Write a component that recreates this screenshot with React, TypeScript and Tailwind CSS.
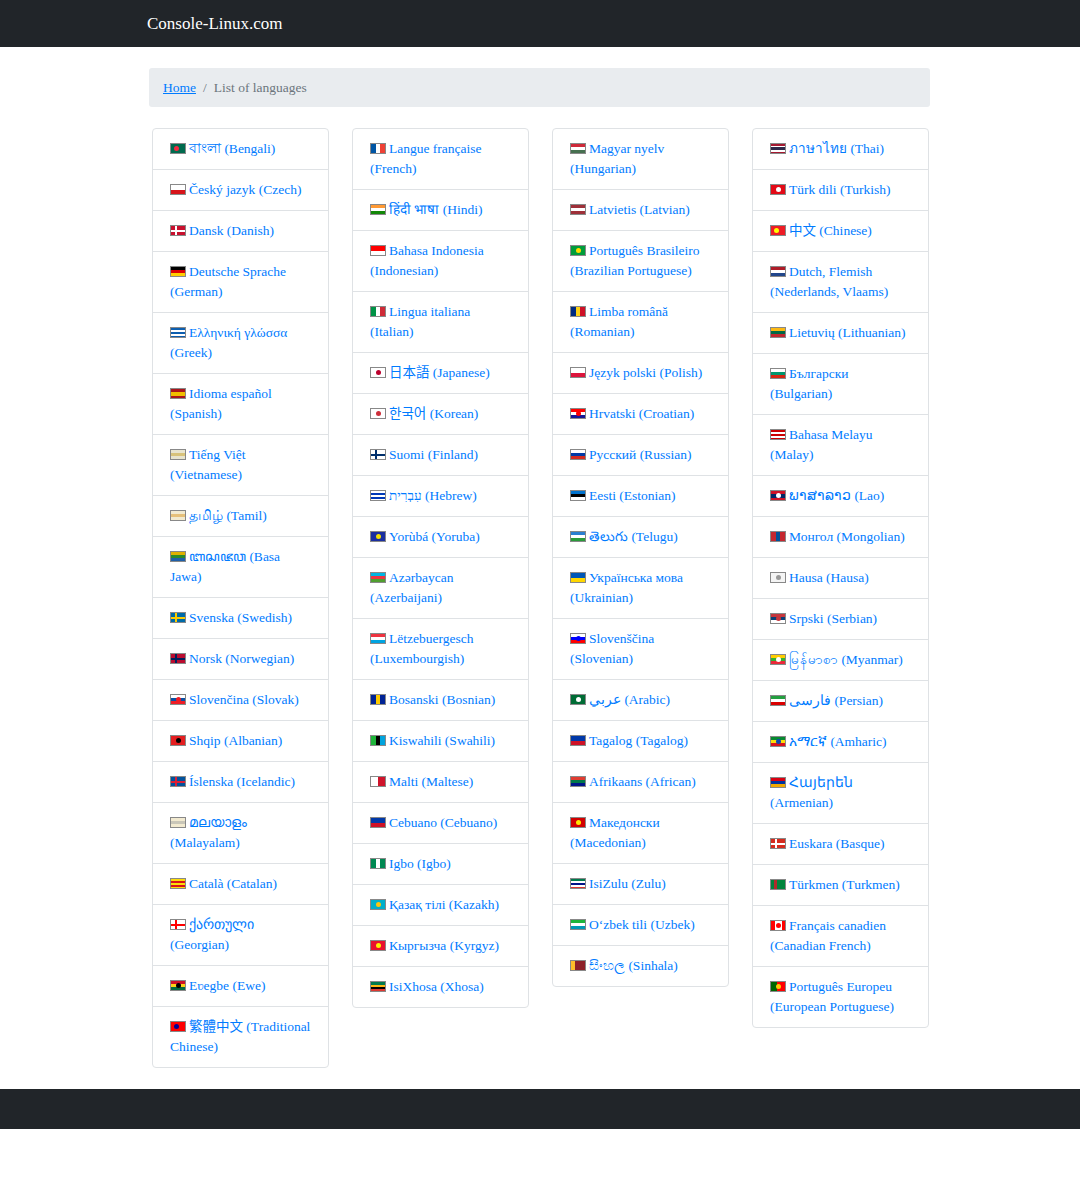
type F = { d: 'h' | 'v'; c: string[]; dot?: string; dotL?: boolean; cross?: string };
type L = { t: string; f: F };

const h = (c: string[], dot?: string): F => ({ d: 'h', c, dot });
const v = (c: string[], dot?: string): F => ({ d: 'v', c, dot });
const x = (bg: string, cross: string): F => ({ d: 'h', c: [bg], cross });

const cols: L[][] = [
  [
    { t: 'বাংলা (Bengali)', f: { d: 'h', c: ['#006a4e'], dot: '#f42a41', dotL: true } },
    { t: 'Český jazyk (Czech)', f: h(['#ffffff', '#d7141a'], '') },
    { t: 'Dansk (Danish)', f: x('#c8102e', '#ffffff') },
    { t: 'Deutsche Sprache (German)', f: h(['#000000', '#dd0000', '#ffce00']) },
    { t: 'Ελληνική γλώσσα (Greek)', f: h(['#0d5eaf', '#ffffff', '#0d5eaf', '#ffffff', '#0d5eaf']) },
    { t: 'Idioma español (Spanish)', f: h(['#aa151b', '#f1bf00', '#f1bf00', '#aa151b']) },
    { t: 'Tiếng Việt (Vietnamese)', f: h(['#e8e4cf', '#d8c27a', '#e8e4cf']) },
    { t: 'தமிழ் (Tamil)', f: h(['#f2ead0', '#e6c07a', '#f2ead0']) },
    { t: 'ꦧꦱꦗꦮ (Basa Jawa)', f: h(['#e0b000', '#2a8a2a', '#1f5fa8']) },
    { t: 'Svenska (Swedish)', f: x('#006aa7', '#fecc00') },
    { t: 'Norsk (Norwegian)', f: x('#ba0c2f', '#00205b') },
    { t: 'Slovenčina (Slovak)', f: h(['#ffffff', '#0b4ea2', '#ee1c25'], '#ee1c25') },
    { t: 'Shqip (Albanian)', f: h(['#e41e20'], '#000000') },
    { t: 'Íslenska (Icelandic)', f: x('#02529c', '#dc1e35') },
    { t: 'മലയാളം (Malayalam)', f: h(['#f2ead0', '#c9c6b8', '#f2ead0']) },
    { t: 'Català (Catalan)', f: h(['#fcdd09', '#da121a', '#fcdd09', '#da121a', '#fcdd09']) },
    { t: 'ქართული (Georgian)', f: x('#ffffff', '#ff0000') },
    { t: 'Eʋegbe (Ewe)', f: h(['#ce1126', '#fcd116', '#006b3f'], '#000000') },
    { t: '繁體中文 (Traditional Chinese)', f: { d: 'h', c: ['#fe0000'], dot: '#000095', dotL: true } },
  ],
  [
    { t: 'Langue française (French)', f: v(['#0055a4', '#ffffff', '#ef4135']) },
    { t: 'हिंदी भाषा (Hindi)', f: h(['#ff9933', '#ffffff', '#138808']) },
    { t: 'Bahasa Indonesia (Indonesian)', f: h(['#ff0000', '#ffffff']) },
    { t: 'Lingua italiana (Italian)', f: v(['#009246', '#ffffff', '#ce2b37']) },
    { t: '日本語 (Japanese)', f: h(['#ffffff'], '#bc002d') },
    { t: '한국어 (Korean)', f: h(['#ffffff'], '#cd2e3a') },
    { t: 'Suomi (Finland)', f: x('#ffffff', '#002f6c') },
    { t: 'עִבְרִית (Hebrew)', f: h(['#ffffff', '#0038b8', '#ffffff', '#0038b8', '#ffffff']) },
    { t: 'Yorùbá (Yoruba)', f: h(['#1b2f9f'], '#f5e000') },
    { t: 'Azərbaycan (Azerbaijani)', f: h(['#00b5e2', '#ef3340', '#509e2f']) },
    { t: 'Lëtzebuergesch (Luxembourgish)', f: h(['#ef3340', '#ffffff', '#00a3e0']) },
    { t: 'Bosanski (Bosnian)', f: v(['#002395', '#fecb00', '#002395']) },
    { t: 'Kiswahili (Swahili)', f: v(['#1eb53a', '#000000', '#00a3dd']) },
    { t: 'Malti (Maltese)', f: v(['#ffffff', '#cf142b']) },
    { t: 'Cebuano (Cebuano)', f: h(['#0038a8', '#ce1126']) },
    { t: 'Igbo (Igbo)', f: v(['#008751', '#ffffff', '#008751']) },
    { t: 'Қазақ тілі (Kazakh)', f: h(['#00afca'], '#fec50c') },
    { t: 'Кыргызча (Kyrgyz)', f: h(['#e8112d'], '#ffef00') },
    { t: 'IsiXhosa (Xhosa)', f: h(['#007a4d', '#ffb612', '#000000', '#de3831']) },
  ],
  [
    { t: 'Magyar nyelv (Hungarian)', f: h(['#ce2939', '#ffffff', '#477050']) },
    { t: 'Latvietis (Latvian)', f: h(['#9e3039', '#ffffff', '#9e3039']) },
    { t: 'Português Brasileiro (Brazilian Portuguese)', f: h(['#009c3b'], '#ffdf00') },
    { t: 'Limba română (Romanian)', f: v(['#002b7f', '#fcd116', '#ce1126']) },
    { t: 'Język polski (Polish)', f: h(['#ffffff', '#dc143c']) },
    { t: 'Hrvatski (Croatian)', f: h(['#ff0000', '#ffffff', '#171796'], '#ff0000') },
    { t: 'Русский (Russian)', f: h(['#ffffff', '#0039a6', '#d52b1e']) },
    { t: 'Eesti (Estonian)', f: h(['#0072ce', '#000000', '#ffffff']) },
    { t: 'తెలుగు (Telugu)', f: h(['#2a7fd0', '#ffffff', '#2a9a3a']) },
    { t: 'Українська мова (Ukrainian)', f: h(['#0057b7', '#ffd700']) },
    { t: 'Slovenščina (Slovenian)', f: h(['#ffffff', '#0000ff', '#ff0000'], '#0000ff') },
    { t: 'عربي (Arabic)', f: h(['#006c35'], '#ffffff') },
    { t: 'Tagalog (Tagalog)', f: h(['#0038a8', '#ce1126']) },
    { t: 'Afrikaans (African)', f: h(['#e03c31', '#007749', '#001489']) },
    { t: 'Македонски (Macedonian)', f: h(['#d20000'], '#ffe600') },
    { t: 'IsiZulu (Zulu)', f: h(['#007a4d', '#ffffff', '#001489', '#ffffff', '#de3831']) },
    { t: 'O‘zbek tili (Uzbek)', f: h(['#1eb53a', '#ffffff', '#0099b5']) },
    { t: 'සිංහල (Sinhala)', f: v(['#ffbe29', '#8d2029', '#8d2029', '#8d2029']) },
  ],
  [
    { t: 'ภาษาไทย (Thai)', f: h(['#a51931', '#ffffff', '#2d2a4a', '#2d2a4a', '#ffffff', '#a51931']) },
    { t: 'Türk dili (Turkish)', f: h(['#e30a17'], '#ffffff') },
    { t: '中文 (Chinese)', f: { d: 'h', c: ['#ee1c25'], dot: '#ffff00', dotL: true } },
    { t: 'Dutch, Flemish (Nederlands, Vlaams)', f: h(['#ae1c28', '#ffffff', '#21468b']) },
    { t: 'Lietuvių (Lithuanian)', f: h(['#fdb913', '#006a44', '#c1272d']) },
    { t: 'Български (Bulgarian)', f: h(['#ffffff', '#00966e', '#d62612']) },
    { t: 'Bahasa Melayu (Malay)', f: h(['#cc0001', '#ffffff', '#cc0001', '#ffffff', '#cc0001']) },
    { t: 'ພາສາລາວ (Lao)', f: h(['#ce1126', '#002868', '#002868', '#ce1126'], '#ffffff') },
    { t: 'Монгол (Mongolian)', f: v(['#c4272f', '#015197', '#c4272f']) },
    { t: 'Hausa (Hausa)', f: h(['#f4f4f4'], '#999999') },
    { t: 'Srpski (Serbian)', f: h(['#c6363c', '#0c4076', '#ffffff'], '#c6363c') },
    { t: 'မြန်မာစာ (Myanmar)', f: h(['#fecb00', '#34b233', '#ea2839'], '#ffffff') },
    { t: 'فارسی (Persian)', f: h(['#239f40', '#ffffff', '#da0000']) },
    { t: 'አማርኛ (Amharic)', f: h(['#078930', '#fcdd09', '#da121a'], '#0f47af') },
    { t: 'Հայերեն (Armenian)', f: h(['#d90012', '#0033a0', '#f2a800']) },
    { t: 'Euskara (Basque)', f: x('#d52b1e', '#ffffff') },
    { t: 'Türkmen (Turkmen)', f: v(['#00843d', '#b22a2a', '#00843d', '#00843d', '#00843d']) },
    { t: 'Français canadien (Canadian French)', f: v(['#ff0000', '#ffffff', '#ffffff', '#ff0000'], '#ff0000') },
    { t: 'Português Europeu (European Portuguese)', f: v(['#006600', '#006600', '#ff0000', '#ff0000', '#ff0000'], '#ffcc00') },
  ],
];

function Flag({ f }: { f: F }) {
  return (
    <span className="relative inline-block w-[16px] h-[11px] mr-[3px] align-middle -translate-y-[1px] border border-[#888] overflow-hidden">
      <span className={`absolute inset-0 flex ${f.d === 'h' ? 'flex-col' : 'flex-row'}`}>
        {f.c.map((c, i) => (
          <span key={i} className="flex-1" style={{ background: c }} />
        ))}
      </span>
      {f.dot ? (
        <span className="absolute top-[2px] w-[5px] h-[5px] rounded-full" style={{ background: f.dot, left: f.dotL ? 3 : 5 }} />
      ) : null}
      {f.cross ? (
        <>
          <span className="absolute top-0 bottom-0 left-[4px] w-[2px]" style={{ background: f.cross }} />
          <span className="absolute left-0 right-0 top-[4px] h-[2px]" style={{ background: f.cross }} />
        </>
      ) : null}
    </span>
  );
}

export default function App() {
  return (
    <div className="min-h-[1181px] bg-white font-[Liberation_Serif,Noto_Sans_CJK_SC,serif] text-[13.5px] leading-[20px] text-[#212529]">
      <div className="h-[47px] bg-[#212529] flex items-center pl-[147px]">
        <span className="text-white text-[17px]">Console-Linux.com</span>
      </div>
      <div className="w-[781px] ml-[149px] mt-[21px]">
        <div className="h-[39px] bg-[#e9ecef] rounded-[3px] flex items-center px-[14px] text-[#6c757d]">
          <a className="text-[#007bff] underline">Home</a>
          <span className="mx-[7px]">/</span>
          <span>List of languages</span>
        </div>
        <div className="grid grid-cols-[177px_177px_177px_177px] gap-x-[23px] ml-[3px] mt-[21px] items-start">
          {cols.map((col, ci) => (
            <div key={ci} className="border border-[#dfe2e5] rounded-[4px] bg-white">
              {col.map((l, i) => (
                <div key={i} className={`px-[17px] py-[10px] ${i ? 'border-t border-[#dfe2e5]' : ''}`}>
                  <a className="text-[#007bff]">
                    <Flag f={l.f} />
                    {l.t}
                  </a>
                </div>
              ))}
            </div>
          ))}
        </div>
      </div>
      <div className="h-[40px] bg-[#212529] mt-[21px]" />
    </div>
  );
}
